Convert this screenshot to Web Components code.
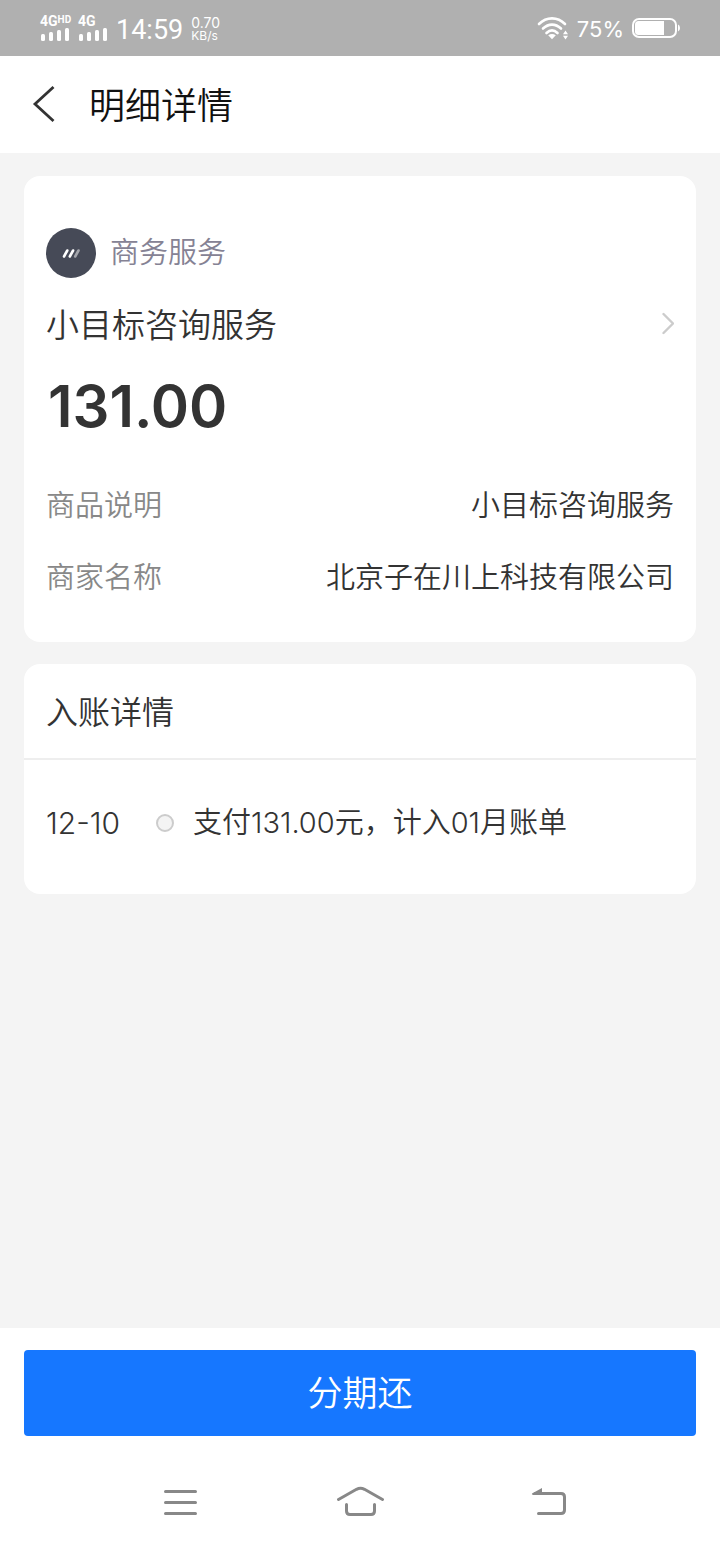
<!DOCTYPE html>
<html lang="zh-CN">
<head>
<meta charset="utf-8">
<meta name="viewport" content="width=device-width, initial-scale=1">
<title>明细详情</title>
<style>
  html, body { margin: 0; }
  body {
    background: #f4f4f4;
    color: #333;
    font-family: "Noto Sans CJK SC", sans-serif;
    font-weight: 350;
  }
</style>
</head>
<body>
<detail-page></detail-page>

<script>
const define = (name, html) => {
  const template = document.createElement('template');
  template.innerHTML = html;
  customElements.define(name, class extends HTMLElement {
    constructor() {
      super();
      this.attachShadow({ mode: 'open' }).append(template.content.cloneNode(true));
    }
  });
};

/* Signal strength: network label above four bars */
define('signal-bars', `
  <style>
    :host { display: flex; flex-direction: column; gap: 1px; width: 30px; }
    .label { font: 700 14px/12px Roboto, sans-serif; height: 12px; display: flex; }
    ::slotted(small) { font-size: 10px; line-height: 9px; }
    svg { display: block; }
  </style>
  <span class="label"><slot></slot></span>
  <svg width="30" height="14" viewBox="0 0 30 14" fill="#fff" aria-hidden="true">
    <rect x="1" y="6" width="4" height="7" rx="1.5"/><rect x="9" y="4" width="4" height="9" rx="1.5"/>
    <rect x="17" y="2" width="4" height="11" rx="1.5"/><rect x="25" y="0" width="4" height="13" rx="1.5"/>
  </svg>`);

define('status-bar', `
  <style>
    :host {
      display: flex; align-items: center; justify-content: space-between;
      height: 56px; padding: 0 40px; background: #b0b0b0; color: #fff;
      font-family: Inter, sans-serif; font-weight: 400;
    }
    .group { display: flex; align-items: center; gap: 8px; }
    .time { font: 400 27px/32px Roboto, sans-serif; padding-top: 4px; }
    .rate { font-size: 14px; line-height: 13px; padding-top: 2px; }
    .rate span { display: block; }
    .rate .unit { font-size: 12px; }
    .battery { font-size: 22px; line-height: 28px; padding-top: 2px; }
    svg { display: block; }
  </style>
  <div class="group">
    <signal-bars>4G<small>HD</small></signal-bars>
    <signal-bars>4G</signal-bars>
    <span class="time">14:59</span>
    <span class="rate"><span>0.70</span><span class="unit">KB/s</span></span>
  </div>
  <div class="group">
    <svg width="32" height="24" viewBox="0 0 32 24" fill="none" stroke="#fff" stroke-width="2.6" stroke-linecap="round" aria-hidden="true">
      <path d="M2 8C9.500 .5 20.500 .5 28 8M6 12.500C11.500 7.300 18.500 7.300 24 12.500M9.500 17C13 13.700 17 13.700 20.500 17"/>
      <path d="M11.200 19.300Q15 16.500 18.800 19.300L15 23.300Z" fill="#fff" stroke="none"/>
      <path d="M26 18.200L28.500 14.500L31 18.200ZM26 19.800L28.500 23.500L31 19.800Z" fill="#fff" stroke="none"/>
    </svg>
    <span class="battery">75%</span>
    <svg width="48" height="20" viewBox="0 0 48 20" fill="none" aria-hidden="true">
      <rect x="1" y="1" width="43" height="18" rx="6" stroke="#fff" stroke-width="2"/>
      <path d="M6.500 3H32V17H6.500Q3 17 3 13.500V6.500Q3 3 6.500 3Z" fill="#fff"/>
      <path d="M46 6.500Q48 7 48 10T46 13.500Z" fill="#fff"/>
    </svg>
  </div>`);

define('title-bar', `
  <style>
    :host { display: flex; align-items: center; gap: 34px; height: 97px; padding: 0 32px; background: #fff; color: #111; }
    button { padding: 0 0 2px; border: 0; background: none; cursor: pointer; }
    svg { display: block; }
    h1 { margin: 0; padding-bottom: 4px; font-size: 36px; line-height: 48px; font-weight: 350; }
  </style>
  <button type="button" aria-label="返回">
    <svg width="23" height="38" viewBox="0 0 23 38" fill="none" stroke="#333" stroke-width="2.800"><path d="M21.500 2L3 19L21.500 36"/></svg>
  </button>
  <h1><slot></slot></h1>`);

define('info-card', `
  <style>
    :host { display: block; background: #fff; border-radius: 16px; }
  </style>
  <slot></slot>`);

define('merchant-summary', `
  <style>
    :host { display: block; padding: 52px 22px 26px; }
    .category { display: flex; align-items: center; gap: 14px; height: 50px; color: #858294; font-size: 29px; line-height: 44px; }
    .category span { padding-bottom: 6px; }
    svg { display: block; flex: none; }
    a { display: flex; align-items: center; justify-content: space-between; margin-top: 22px; color: inherit; text-decoration: none; font-size: 33px; line-height: 46px; }
    .amount { margin: 24px 0 0; padding-left: 2px; font: 600 58px/72px Inter, sans-serif; }
  </style>
  <div class="category">
    <svg width="50" height="50" viewBox="0 0 50 50" aria-hidden="true">
      <circle cx="25" cy="25" r="25" fill="#464a57"/>
      <g fill="none" stroke="#fff" stroke-width="2.600" stroke-linecap="round">
        <path d="M18 28.500L21.300 22.500M23.800 28.500L27.100 22.500"/><path d="M29.200 28.500L32.500 22.500" opacity=".5"/>
      </g>
    </svg>
    <span><slot name="category"></slot></span>
  </div>
  <a href="#merchant">
    <slot name="name"></slot>
    <svg width="12" height="24" viewBox="0 0 12 24" fill="none" stroke="#ccc" stroke-width="2.400" stroke-linecap="round" stroke-linejoin="round"><path d="M1.500 3L11 12.500L1.500 22"/></svg>
  </a>
  <p class="amount"><slot name="amount"></slot></p>`);

define('detail-row', `
  <style>
    :host { display: flex; justify-content: space-between; gap: 24px; padding: 13px 22px 15px; font-size: 29px; line-height: 44px; }
    .label { color: #888; }
    .value { text-align: right; }
  </style>
  <span class="label"><slot name="label"></slot></span>
  <span class="value"><slot></slot></span>`);

define('card-heading', `
  <style>
    :host { display: block; padding: 24px 22px 26px; border-bottom: 2px solid #eee; }
    h2 { margin: 0; font-size: 32px; line-height: 44px; font-weight: 350; }
  </style>
  <h2><slot></slot></h2>`);

define('timeline-entry', `
  <style>
    :host { display: flex; align-items: center; padding: 41px 22px 49px; font-family: Inter, "Noto Sans CJK SC", sans-serif; font-size: 29px; line-height: 44px; }
    .date { min-width: 110px; font-size: 30px; }
    .dot { box-sizing: border-box; width: 18px; height: 18px; margin-right: 19px; flex: none; border: 2px solid #ccc; border-radius: 50%; background: #f4f4f4; }
  </style>
  <span class="date"><slot name="date"></slot></span>
  <i class="dot"></i>
  <span><slot></slot></span>`);

define('action-bar', `
  <style>
    :host { display: block; padding: 22px 24px 24px; background: #fff; }
    button {
      display: block; width: 100%; padding: 17px 0 21px; border: 0; border-radius: 4px;
      background: #1677ff; color: #fff; font: inherit; font-size: 35px; line-height: 48px; cursor: pointer;
    }
  </style>
  <button type="button"><slot></slot></button>`);

define('system-nav', `
  <style>
    :host { display: grid; grid-template-columns: repeat(3, 1fr); padding: 0 12.5%; background: #fff; }
    button { display: flex; justify-content: center; align-items: center; height: 84px; padding: 0; border: 0; background: none; }
    svg { display: block; fill: none; stroke: #888; stroke-width: 3; stroke-linecap: round; }
  </style>
  <button type="button" aria-label="最近任务">
    <svg width="64" height="32" viewBox="0 0 64 32"><path d="M17.500 5.500H47.500M17.500 16.500H47.500M17.500 27.500H47.500"/></svg>
  </button>
  <button type="button" aria-label="主屏幕">
    <svg width="64" height="32" viewBox="0 0 64 32"><path d="M10.500 13.500L28.500 3.300Q32.500 1.300 36.500 3.300L54.500 13.500M18.500 18.500V25Q18.500 28.500 22 28.500H43Q46.500 28.500 46.500 25V18.500"/></svg>
  </button>
  <button type="button" aria-label="返回上一页">
    <svg width="64" height="32" viewBox="0 0 64 32"><path d="M27 7.500H53Q56.500 7.500 56.500 11V24Q56.500 27.500 53 27.500H30.500"/><path d="M24 7.500L34 2V8.900H25Q23.300 8.500 24 7.500Z" fill="#888" stroke="none"/></svg>
  </button>`);

define('detail-page', `
  <style>
    :host { display: flex; flex-direction: column; min-height: 100vh; }
    main { flex: 1; display: flex; flex-direction: column; gap: 22px; padding: 23px 24px; }
    .rows { padding-bottom: 30px; }
  </style>
  <status-bar></status-bar>
  <title-bar>明细详情</title-bar>
  <main>
    <info-card>
      <merchant-summary>
        <span slot="category">商务服务</span>
        <span slot="name">小目标咨询服务</span>
        <span slot="amount">131.00</span>
      </merchant-summary>
      <div class="rows">
        <detail-row><span slot="label">商品说明</span>小目标咨询服务</detail-row>
        <detail-row><span slot="label">商家名称</span>北京子在川上科技有限公司</detail-row>
      </div>
    </info-card>
    <info-card>
      <card-heading>入账详情</card-heading>
      <timeline-entry><span slot="date">12-10</span>支付131.00元，计入01月账单</timeline-entry>
    </info-card>
  </main>
  <action-bar>分期还</action-bar>
  <system-nav></system-nav>`);
</script>
</body>
</html>
